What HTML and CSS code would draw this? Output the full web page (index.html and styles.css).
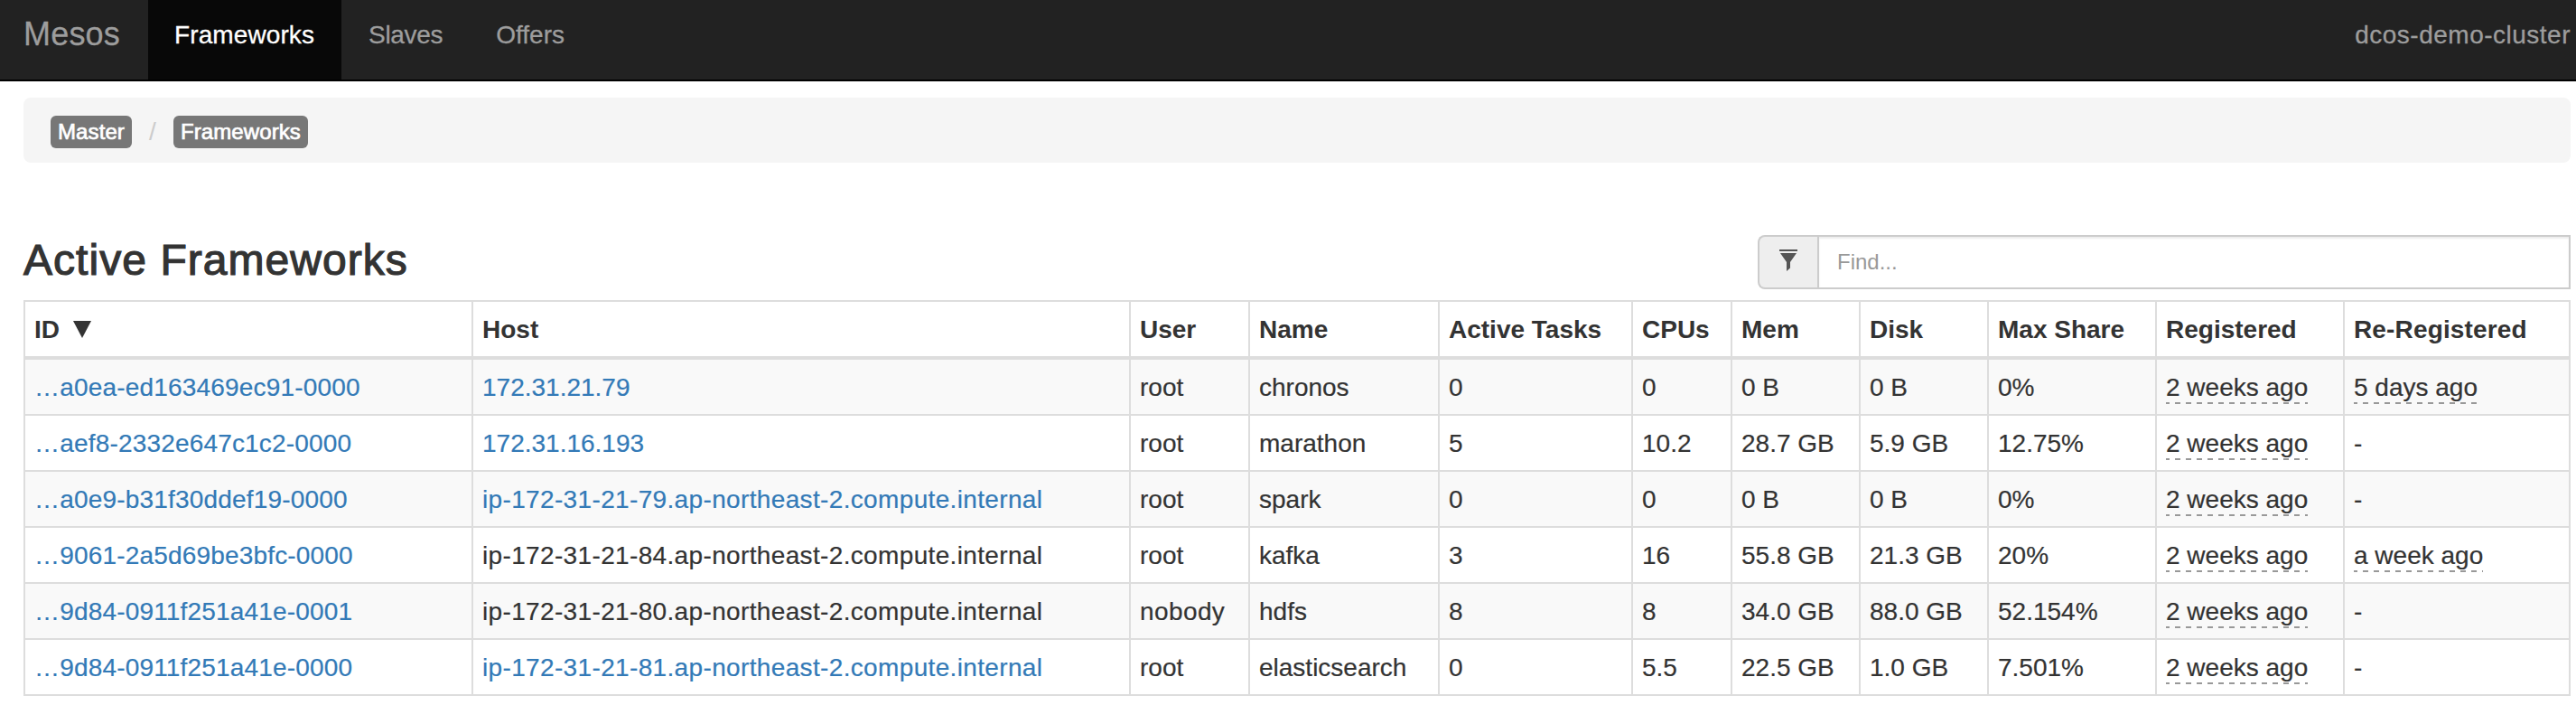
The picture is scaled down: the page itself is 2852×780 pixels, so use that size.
FILE: index.html
```html
<!DOCTYPE html>
<html lang="en">
<head>
<meta charset="utf-8">
<title>Mesos</title>
<link rel="stylesheet" href="styles.css">
</head>
<body>
<nav class="navbar">
  <a class="brand">Mesos</a>
  <a class="nav-item active">Frameworks</a>
  <a class="nav-item slaves">Slaves</a>
  <a class="nav-item offers">Offers</a>
  <span class="cluster">dcos-demo-cluster</span>
</nav>
<main class="container">
  <div class="breadcrumb">
    <span class="label">Master</span>
    <span class="divider">/</span>
    <span class="label">Frameworks</span>
  </div>
  <div class="table-head">
    <h2>Active Frameworks</h2>
    <div class="search">
      <span class="addon"><svg width="20" height="24" viewBox="0 0 20 24"><path fill="#555" d="M0 0h20v2H0zM1 4h18l-7 10v6.500l-4 3.500V14z"/></svg></span>
      <input type="text" placeholder="Find...">
    </div>
  </div>
  <table class="frameworks">
    <colgroup><col class="c-id"><col class="c-host"><col class="c-user"><col class="c-name"><col class="c-tasks"><col class="c-cpus"><col class="c-mem"><col class="c-disk"><col class="c-share"><col class="c-reg"><col class="c-rereg"></colgroup>
    <thead>
      <tr><th>ID<svg class="sort" width="20" height="19" viewBox="0 0 20 19"><path fill="#333" d="M0 0h20L10 19z"/></svg></th><th>Host</th><th>User</th><th>Name</th><th>Active Tasks</th><th>CPUs</th><th>Mem</th><th>Disk</th><th>Max Share</th><th>Registered</th><th class="rereg">Re-Registered</th></tr>
    </thead>
    <tbody>
      <tr><td><a class="id">…a0ea-ed163469ec91-0000</a></td><td><a>172.31.21.79</a></td><td>root</td><td>chronos</td><td>0</td><td>0</td><td>0 B</td><td>0 B</td><td>0%</td><td><abbr>2 weeks ago</abbr></td><td><abbr>5 days ago</abbr></td></tr>
      <tr><td><a class="id">…aef8-2332e647c1c2-0000</a></td><td><a>172.31.16.193</a></td><td>root</td><td>marathon</td><td>5</td><td>10.2</td><td>28.7 GB</td><td>5.9 GB</td><td>12.75%</td><td><abbr>2 weeks ago</abbr></td><td>-</td></tr>
      <tr><td><a class="id">…a0e9-b31f30ddef19-0000</a></td><td><a class="host">ip-172-31-21-79.ap-northeast-2.compute.internal</a></td><td>root</td><td>spark</td><td>0</td><td>0</td><td>0 B</td><td>0 B</td><td>0%</td><td><abbr>2 weeks ago</abbr></td><td>-</td></tr>
      <tr><td><a class="id">…9061-2a5d69be3bfc-0000</a></td><td class="host">ip-172-31-21-84.ap-northeast-2.compute.internal</td><td>root</td><td>kafka</td><td>3</td><td>16</td><td>55.8 GB</td><td>21.3 GB</td><td>20%</td><td><abbr>2 weeks ago</abbr></td><td><abbr>a week ago</abbr></td></tr>
      <tr><td><a class="id">…9d84-0911f251a41e-0001</a></td><td class="host">ip-172-31-21-80.ap-northeast-2.compute.internal</td><td class="nobody">nobody</td><td>hdfs</td><td>8</td><td>8</td><td>34.0 GB</td><td>88.0 GB</td><td>52.154%</td><td><abbr>2 weeks ago</abbr></td><td>-</td></tr>
      <tr><td><a class="id">…9d84-0911f251a41e-0000</a></td><td><a class="host">ip-172-31-21-81.ap-northeast-2.compute.internal</a></td><td>root</td><td>elasticsearch</td><td>0</td><td>5.5</td><td>22.5 GB</td><td>1.0 GB</td><td>7.501%</td><td><abbr>2 weeks ago</abbr></td><td>-</td></tr>
    </tbody>
  </table>
</main>
</body>
</html>
```
FILE: styles.css
```css
* { box-sizing: border-box; }
body {
  margin: 0;
  background: #fff;
  color: #333;
  font: 28px/40px "Liberation Sans", Arial, sans-serif;
}
.navbar {
  display: flex;
  height: 90px;
  padding-right: 6px;
  background: #222;
  border-bottom: 2px solid #000;
  color: #9d9d9d;
}
.brand { width: 164px; padding: 18px 0 0 26px; font-size: 36px; letter-spacing: .2px; -webkit-text-stroke: .3px; }
.nav-item { padding: 19px 30px 0; -webkit-text-stroke: .3px; }
.active { width: 214px; padding-left: 29px; background: #080808; color: #fff; letter-spacing: .1px; }
.slaves { letter-spacing: -.3px; }
.offers { padding-left: 29px; }
.cluster { margin-left: auto; padding-top: 19px; letter-spacing: .5px; -webkit-text-stroke: .3px; }
.container { padding: 18px 6px 0 26px; }
.breadcrumb {
  display: flex;
  align-items: center;
  height: 72px;
  padding: 4px 30px 0;
  background: #f5f5f5;
  border-radius: 8px;
}
.label {
  height: 36px;
  padding: 0 8px;
  border-radius: 6px;
  background: #777;
  color: #fff;
  font-size: 24px;
  line-height: 35px;
  letter-spacing: .1px;
  -webkit-text-stroke: .7px;
}
.divider { width: 46px; text-align: center; color: #ccc; line-height: 32px; }
.table-head { display: flex; justify-content: space-between; height: 152px; padding-top: 80px; }
h2 {
  margin: 0;
  padding-top: 1px;
  font-size: 48px;
  font-weight: 400;
  line-height: 54px;
  letter-spacing: 1.05px;
  -webkit-text-stroke: 1.2px;
}
.search { display: flex; width: 900px; height: 60px; }
.addon {
  width: 66px;
  padding: 14px 0 0 22px;
  border: 2px solid #ccc;
  border-right: 0;
  border-radius: 8px 0 0 8px;
  background: #eee;
  line-height: 0;
}
.search input {
  flex: 1;
  padding: 0 20px;
  border: 2px solid #ccc;
  border-radius: 0;
  box-shadow: inset 0 2px 2px rgba(0, 0, 0, .075);
  background: #fff;
  font: 24px "Liberation Sans", Arial, sans-serif;
}
.search input::placeholder { color: #999; opacity: 1; }
.frameworks { width: 2820px; table-layout: fixed; border-collapse: collapse; }
.frameworks th, .frameworks td { padding: 11px 10px 9px; border: 2px solid #ddd; text-align: left; white-space: nowrap; }
.frameworks td { -webkit-text-stroke: .2px; }
.frameworks thead th { border-bottom-width: 4px; }
.frameworks tbody tr:nth-child(odd) { background: #f9f9f9; }
.frameworks a { color: #337ab7; }
.id { letter-spacing: .18px; }
.host { letter-spacing: .35px; }
.nobody { letter-spacing: .4px; }
.rereg { letter-spacing: .15px; }
.sort { margin-left: 15px; }
abbr {
  padding-bottom: 3px;
  background: repeating-linear-gradient(90deg, #999 0 4px, transparent 4px 10px, #999 10px 12px) left bottom / 100% 2px no-repeat;
}
.c-id { width: 496px; }
.c-host { width: 728px; }
.c-user { width: 132px; }
.c-name { width: 210px; }
.c-tasks { width: 214px; }
.c-cpus { width: 110px; }
.c-mem, .c-disk { width: 142px; }
.c-share { width: 186px; }
.c-reg { width: 208px; }
.c-rereg { width: 250px; }
```
